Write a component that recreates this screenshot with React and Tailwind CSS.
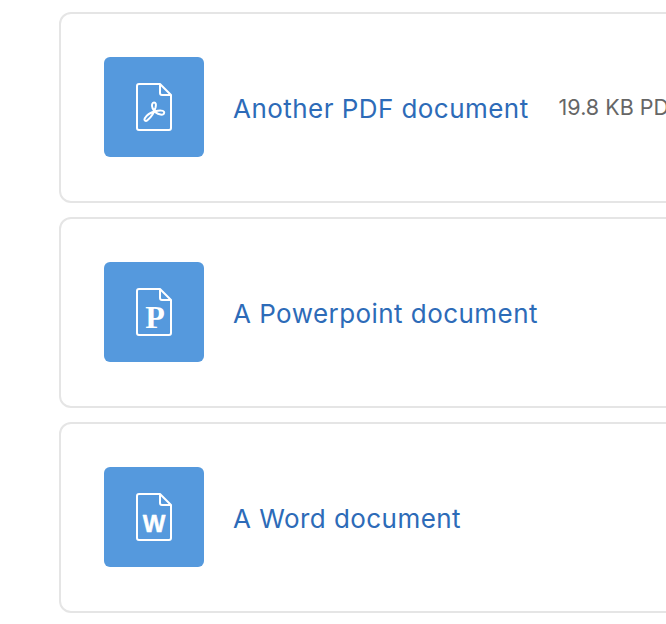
const documents = [
  { title: "Another PDF document", meta: "19.8 KB PDF document", type: "pdf" },
  { title: "A Powerpoint document", type: "P" },
  { title: "A Word document", type: "W" },
];

function FileIcon({ type }) {
  return (
    <svg width="38" height="50" viewBox="-1 -1 38 50" fill="none" stroke="white" strokeWidth="2" strokeLinejoin="round">
      <path d="M3 1 H24 L35 12 V45 a2 2 0 0 1 -2 2 H3 a2 2 0 0 1 -2 -2 V3 a2 2 0 0 1 2 -2 Z" />
      <path d="M24 1 V10 a2 2 0 0 0 2 2 H35" />
      {type === "pdf" && (
        <path d="M18 19.5 c-2 0 -2.5 3 -1.5 5.5 c1.5 3.5 4.5 6 8 6.5 c2 .4 3.7 0 3.7 -2 c0 -2.2 -4.5 -2.4 -9 -1.2 c-4.5 1.2 -9 4.4 -10.5 7.2 c-1 2 1 3.2 2.7 1.8 c3.5 -2.8 7 -8.5 8.2 -13 c.7 -3 .3 -4.8 -1.6 -4.8 Z" />
      )}
      {type === "P" && (
        <text x="19" y="40" textAnchor="middle" fill="white" stroke="none" fontFamily="'Liberation Serif', serif" fontWeight="700" fontSize="32">
          P
        </text>
      )}
      {type === "W" && (
        <text x="18" y="39" textAnchor="middle" fill="white" stroke="white" strokeWidth="0.5" fontFamily="'Liberation Sans', sans-serif" fontWeight="700" fontSize="24">
          W
        </text>
      )}
    </svg>
  );
}

export default function App() {
  return (
    <div className="w-[666px] h-[624px] overflow-hidden bg-white pt-3 pl-[59px] font-['Inter',sans-serif]">
      <div className="flex flex-col gap-[14px] w-[800px]">
        {documents.map((doc) => (
          <div key={doc.title} className="flex items-center h-[191px] border-2 border-[#e5e5e5] rounded-xl pl-[43px] pb-px">
            <div className="flex items-center justify-center w-[100px] h-[100px] rounded-md bg-[#5599dd] shrink-0">
              <FileIcon type={doc.type} />
            </div>
            <a className="ml-[29px] mt-[3px] text-[26px] tracking-[0.45px] text-[#2d6bb8] whitespace-nowrap">{doc.title}</a>
            {doc.meta && <span className="ml-[30px] mt-[1px] text-[21.5px] text-[#666666] whitespace-nowrap">{doc.meta}</span>}
          </div>
        ))}
      </div>
    </div>
  );
}
